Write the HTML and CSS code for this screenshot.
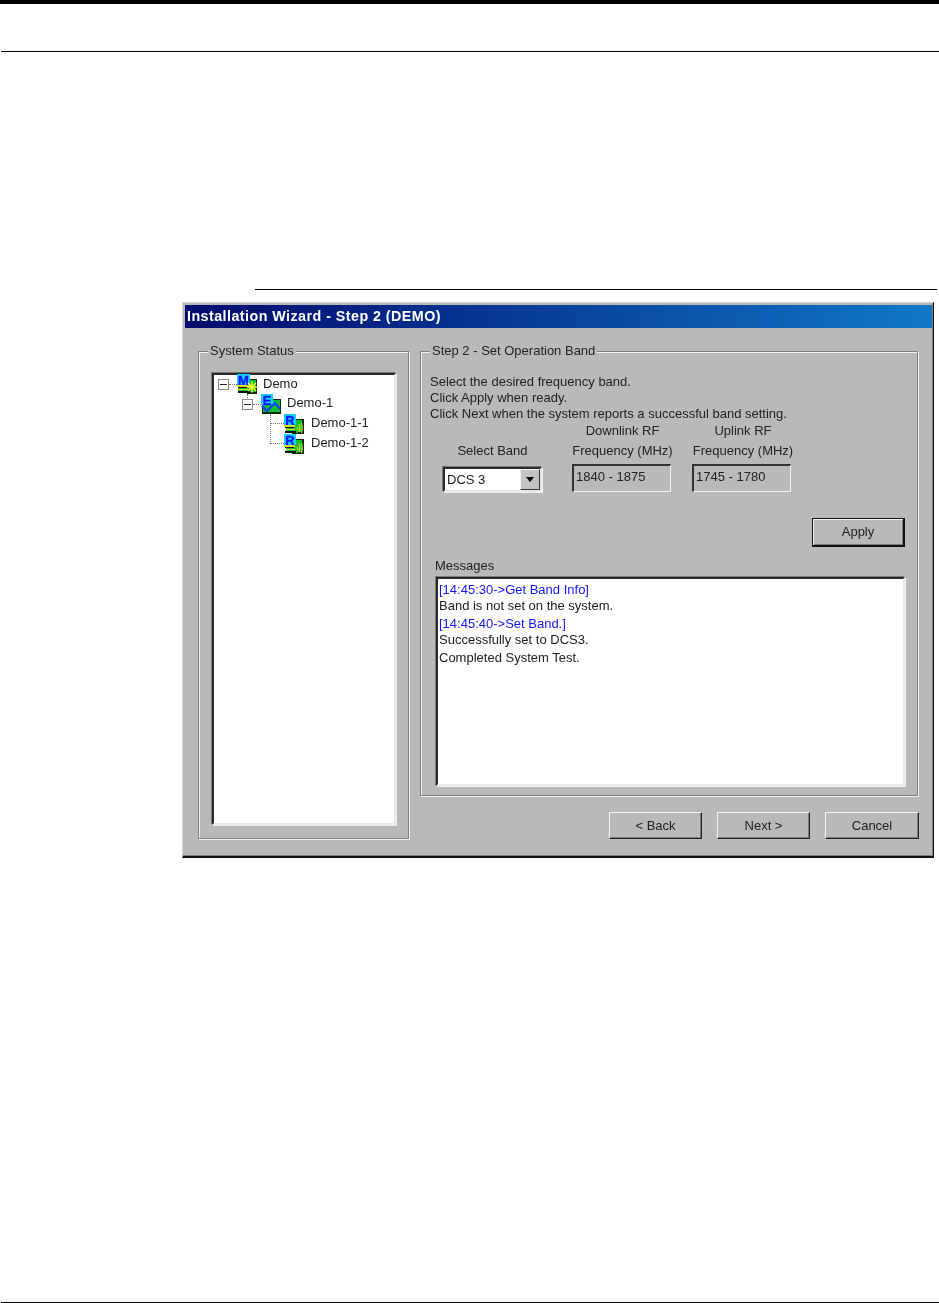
FILE: index.html
```html
<!DOCTYPE html>
<html lang="en">
<head>
<meta charset="utf-8">
<title>Installation Wizard</title>
<link rel="stylesheet" href="styles.css">
</head>
<body>
<svg class="defs" width="0" height="0" aria-hidden="true">
  <defs>
    <symbol id="ico-m" viewBox="0 0 20 20">
      <rect x="10" y="5" width="10" height="15" fill="#0a2a0a"/>
      <rect x="11" y="6" width="8" height="12" fill="#10c030"/>
      <rect x="1" y="14" width="12" height="5" fill="#10c030"/>
      <rect x="0" y="0" width="13" height="11" fill="#14d4ff"/>
      <text x="6.500" y="10.500" class="ico-letter">M</text>
      <rect x="0" y="11" width="16" height="2" fill="#e8d820"/>
      <rect x="1" y="13" width="10" height="1" fill="#111"/>
      <rect x="1" y="15" width="10" height="1" fill="#e8d820"/>
      <rect x="1" y="17" width="12" height="2" fill="#111"/>
      <path d="M15 7.500v11M9.500 13h11M11 9l8 8M19 9l-8 8" stroke="#ffff30" stroke-width="1.300"/>
    </symbol>
    <symbol id="ico-e" viewBox="0 0 20 20">
      <rect x="1" y="9" width="19" height="11" fill="#0a2a0a"/>
      <rect x="2" y="10" width="17" height="8" fill="#10c030"/>
      <rect x="11" y="5" width="9" height="6" fill="#0a2a0a"/>
      <rect x="12" y="6" width="7" height="5" fill="#10c030"/>
      <rect x="0" y="0" width="12" height="11" fill="#14d4ff"/>
      <text x="6" y="10.500" class="ico-letter">E</text>
      <path d="M1 12l5 5 5-5 3-3 5 6" fill="none" stroke="#1038ff" stroke-width="2"/>
    </symbol>
    <symbol id="ico-r" viewBox="0 0 20 20">
      <rect x="8" y="5" width="12" height="15" fill="#0a2a0a"/>
      <rect x="10" y="6" width="8" height="12" fill="#10c030"/>
      <rect x="2" y="14" width="12" height="5" fill="#10c030"/>
      <rect x="0" y="0" width="12" height="11" fill="#14d4ff"/>
      <text x="6" y="10.500" class="ico-letter">R</text>
      <rect x="0" y="11" width="11" height="2" fill="#e8d820"/>
      <rect x="1" y="13" width="8" height="1" fill="#111"/>
      <rect x="2" y="15" width="9" height="1" fill="#e8d820"/>
      <rect x="1" y="17" width="11" height="2" fill="#111"/>
      <path d="M13 13l1 3M15 10c1 2 1 5 0 8M17.500 9c1 3 1 7 0 10" fill="none" stroke="#e8d820" stroke-width="1.100"/>
    </symbol>
  </defs>
</svg>

<div class="top-bar"></div>
<div class="rule rule-head"></div>
<div class="rule rule-section"></div>

<div class="window">
  <div class="titlebar">Installation Wizard - Step 2 (DEMO)</div>
  <div class="window-body">
    <section class="group group-status">
      <div class="legend">System Status</div>
      <div class="tree sunken">
        <div class="tree-row level-0">
          <span class="expander"></span>
          <svg class="tree-icon"><use href="#ico-m"/></svg>
          <span class="tree-label">Demo</span>
        </div>
        <div class="tree-row level-1">
          <span class="expander"></span>
          <svg class="tree-icon"><use href="#ico-e"/></svg>
          <span class="tree-label">Demo-1</span>
        </div>
        <div class="tree-row level-2">
          <svg class="tree-icon"><use href="#ico-r"/></svg>
          <span class="tree-label">Demo-1-1</span>
        </div>
        <div class="tree-row level-2 last">
          <svg class="tree-icon"><use href="#ico-r"/></svg>
          <span class="tree-label">Demo-1-2</span>
        </div>
      </div>
    </section>

    <div class="main-col">
      <section class="group group-step">
        <div class="legend">Step 2 - Set Operation Band</div>
        <p class="intro">Select the desired frequency band.<br>Click Apply when ready.<br>Click Next when the system reports a successful band setting.</p>
        <div class="band-row">
          <div class="band-col col-select">
            <div class="band-label">Select Band</div>
            <div class="combo sunken">
              <span class="combo-value">DCS 3</span>
              <span class="combo-btn"><span class="combo-arrow"></span></span>
            </div>
          </div>
          <div class="band-col col-down">
            <div class="band-label">Downlink RF<br>Frequency (MHz)</div>
            <div class="readout">1840 - 1875</div>
          </div>
          <div class="band-col col-up">
            <div class="band-label">Uplink RF<br>Frequency (MHz)</div>
            <div class="readout">1745 - 1780</div>
          </div>
        </div>
        <div class="apply-row"><button class="btn btn-default" type="button">Apply</button></div>
        <div class="messages-label">Messages</div>
        <div class="messages sunken">
          <div class="msg-head">[14:45:30-&gt;Get Band Info]</div>
          <div>Band is not set on the system.</div>
          <div class="msg-head">[14:45:40-&gt;Set Band.]</div>
          <div>Successfully set to DCS3.</div>
          <div>Completed System Test.</div>
        </div>
      </section>
      <div class="nav-row">
        <button class="btn" type="button">&lt; Back</button>
        <button class="btn" type="button">Next &gt;</button>
        <button class="btn btn-wide" type="button">Cancel</button>
      </div>
    </div>
  </div>
</div>

<div class="rule rule-foot"></div>
</body>
</html>
```

FILE: styles.css
```css
* { box-sizing: border-box; }
html, body { margin: 0; padding: 0; background: #fff; }
body { height: 1303px; overflow: hidden; font-family: "Liberation Sans", Arial, sans-serif; }
.defs { position: absolute; }

.top-bar { height: 4px; background: #000; }
.rule { height: 1px; background: #000; }
.rule-head { margin: 47px 0 0 1px; }
.rule-section { margin: 237px 2px 0 255px; }
.rule-foot { margin: 444px 0 0 1px; }

.window {
  width: 752px;
  height: 556px;
  margin: 12px 0 0 182px;
  padding: 2px 1px 0 2px;
  background: #b9b9b9;
  border-style: solid;
  border-width: 1px 1px 2px 1px;
  border-color: #d6d6d6 #111 #111 #d6d6d6;
  box-shadow: inset -1px -1px 0 #7c7c7c;
  font-size: 13px;
  line-height: 16px;
  color: #222;
  filter: blur(.4px);
}
.titlebar {
  height: 23px;
  padding-left: 2px;
  background: linear-gradient(90deg, #000a6e, #1078c8);
  color: #fff;
  font-size: 14.300px;
  font-weight: 700;
  line-height: 22px;
  letter-spacing: .45px;
  white-space: nowrap;
}
.window-body {
  display: flex;
  gap: 11px;
  padding: 23px 0 0 13px;
}

.group {
  position: relative;
  border: 1px solid #808080;
  box-shadow: 1px 1px 0 #f2f2f2, inset 1px 1px 0 #f2f2f2;
}
.legend {
  position: absolute;
  top: -9px;
  left: 9px;
  padding: 0 2px;
  background: #b9b9b9;
  white-space: nowrap;
}
.sunken {
  background: #fff;
  border: 2px solid;
  border-color: #2a2a2a #e8e8e8 #e8e8e8 #2a2a2a;
  box-shadow: -1px -1px 0 #777, 1px 1px 0 #eee;
}

.group-status { width: 211px; height: 488px; padding: 21px 12px 13px 13px; }
.tree { height: 100%; }
.tree-row { position: relative; display: flex; align-items: center; height: 20px; white-space: nowrap; }
.tree-row:first-child { margin-top: -1px; }
.level-0 { padding-left: 4px; }
.level-1 { padding-left: 28px; }
.level-2 { padding-left: 70px; }
.expander {
  position: relative;
  width: 11px;
  height: 11px;
  border: 1px solid #8c8c8c;
  background: #fff;
}
.expander::after {
  content: "";
  position: absolute;
  left: 1px;
  top: 4px;
  width: 7px;
  height: 1px;
  background: #222;
}
.tree-icon { width: 20px; height: 20px; margin-left: 8px; flex: none; }
.level-2 .tree-icon { margin-left: 0; }
.tree-label { margin-left: 6px; position: relative; top: -1px; }
.level-0 .tree-label { top: 0; }
.level-2 .tree-label { margin-left: 7px; }
.ico-letter {
  font: 700 13px "Liberation Sans", Arial, sans-serif;
  fill: #0a18ff;
  stroke: #0a18ff;
  stroke-width: .4px;
  text-anchor: middle;
}
.level-0::before, .level-1::before {
  content: "";
  position: absolute;
  border-left: 1px dotted #777;
}
.level-0::before { left: 33px; top: 20px; height: 10px; }
.level-1::before { left: 56px; top: 20px; height: 30px; }
.level-2::after, .level-1::after, .level-0::after {
  content: "";
  position: absolute;
  border-top: 1px dotted #777;
}
.level-0::after { left: 15px; top: 10px; width: 8px; }
.level-1::after { left: 39px; top: 10px; width: 8px; }
.level-2::after { left: 56px; top: 9px; width: 14px; }

.main-col { display: flex; flex-direction: column; gap: 16px; width: 498px; }
.group-step { height: 445px; padding: 22px 12px 8px 9px; }
.intro { margin: 0; }
.band-row { display: flex; margin: -1px 0 0 13px; }
.band-col { display: flex; flex-direction: column; justify-content: flex-end; }
.band-label { text-align: center; line-height: 20px; white-space: nowrap; padding-bottom: 3px; }
.col-select .band-label { padding-bottom: 6px; }
.col-select { width: 99px; margin-right: 30px; }
.col-down { width: 101px; margin-right: 19px; }
.col-up { width: 102px; }

.combo { display: flex; align-items: center; height: 25px; justify-content: space-between; padding-left: 2px; }
.combo-btn {
  display: flex;
  align-items: center;
  justify-content: center;
  width: 20px;
  height: 21px;
  background: #c4c4c4;
  border: 1px solid;
  border-color: #f2f2f2 #333 #333 #f2f2f2;
}
.combo-arrow {
  width: 0;
  height: 0;
  border: 4px solid transparent;
  border-top: 5px solid #000;
  border-bottom: 0;
}
.readout {
  width: 99px;
  height: 28px;
  padding: 3px 0 0 2px;
  border: 1px solid;
  border-color: #333 #f0f0f0 #f0f0f0 #333;
  border-left-width: 2px;
  border-top-width: 2px;
}

.apply-row { display: flex; justify-content: flex-end; margin-top: 26px; }
.btn {
  width: 93px;
  height: 27px;
  padding: 0;
  background: #b9b9b9;
  border: 1px solid;
  border-color: #f2f2f2 #222 #222 #f2f2f2;
  box-shadow: inset -1px -1px 0 #7c7c7c;
  color: #222;
  font: inherit;
}
.btn-wide { width: 94px; }
.btn-default {
  height: 29px;
  border-width: 1px 2px 2px 1px;
  border-color: #111;
  box-shadow: inset 1px 1px 0 #f2f2f2, inset -1px -1px 0 #7c7c7c;
}
.messages-label { margin: 11px 0 3px 5px; }
.messages { height: 209px; margin-left: 6px; padding: 3px 0 0 1px; }
.msg-head { color: #1414ff; }
.msg-head + div { margin-bottom: 2px; }
.nav-row { display: flex; justify-content: flex-end; gap: 15px; margin-right: -1px; }
```
